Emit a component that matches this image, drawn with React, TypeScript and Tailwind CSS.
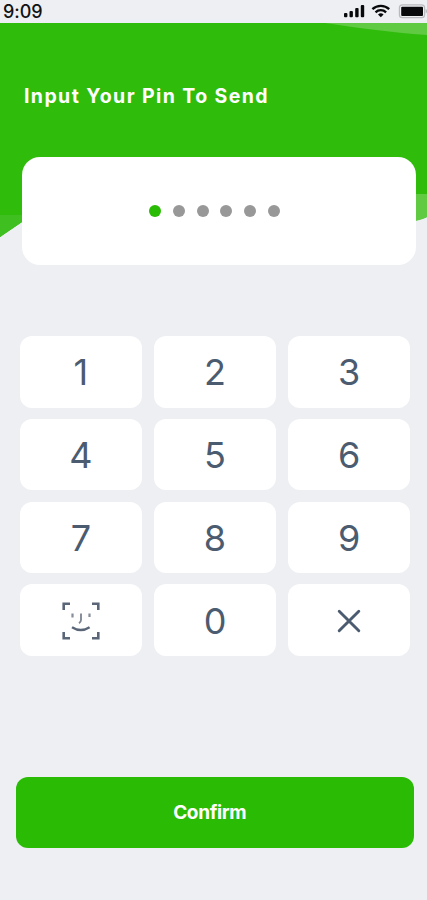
import React, { useState } from 'react';

const keys = ['1', '2', '3', '4', '5', '6', '7', '8', '9', 'face', '0', 'clear'];

function StatusBar() {
    return (
        <div className='w-full h-[23px] relative flex items-center justify-between bg-[#eeeff3] pl-[3px]'>
            <span className='text-[18px] leading-[22px] font-medium text-[#111214] tracking-[-0.05px]'>9:09</span>
            <svg className='w-[84px] h-[23px]' viewBox='343 0 84 23' fill='#08090a'>
                <rect x='344' y='13' width='3.4' height='4.2' rx='1' />
                <rect x='349.5' y='11' width='3.4' height='6.2' rx='1' />
                <rect x='355.2' y='8' width='3.4' height='9.2' rx='1' />
                <rect x='360.8' y='5' width='3.4' height='12.2' rx='1' />
                <g fill='none' stroke='#08090a' strokeWidth='2.3'>
                    <path d='M372.4 9.2a12.2 12.2 0 0 1 16.8 0' />
                    <path d='M375.5 12.3a7.7 7.7 0 0 1 10.6 0' />
                </g>
                <path d='M378 14.4a4.3 4.3 0 0 1 5.6 0l-2.8 2.9z' />
                <rect x='399.4' y='4.9' width='25.2' height='12.8' rx='3' fill='none' stroke='#b9babe' strokeWidth='1.2' />
                <rect x='401.2' y='6.7' width='21.8' height='9.2' rx='1' />
                <path d='M425.7 9v4.5c1-.3 1.3-1.2 1.3-2.2s-.3-2-1.3-2.3z' fill='#b9babe' />
            </svg>
        </div>
    );
}

function HeaderShape() {
    return (
        <svg className='absolute top-0 left-0 w-[427px] h-[216px]' viewBox='0 0 427 216'>
            <path d='M0 0H427V194Q416 198 400 200L40 187L22 199L0 214Z' fill='#2fbc0b' />
            <path d='M110 0H427V12Q385 9 325 0Z' fill='#5fca42' />
            <path d='M0 192H32L22 199L0 214Z' fill='#40c020' />
            <path d='M410 171H427V194Q422 197 410 199Z' fill='#5fca42' />
        </svg>
    );
}

function FaceIcon() {
    return (
        <svg className='w-[38px] h-[38px] mt-[2px]' viewBox='0 0 38 38' fill='none' stroke='#5a6677'>
            <path d='M1.7 8V1.7H8M30 1.7h6.3V8M1.7 30v6.3H8M30 36.3h6.3V30' strokeWidth='2.6' />
            <path d='M10.5 11.5v4M27.5 11.5v3.5' strokeWidth='2.2' stroke='#858e9a' />
            <path d='M19 11.5v6.5q0 1.8-2 3.2' strokeWidth='1.8' stroke='#7b8490' />
            <path d='M10 25.2q8.8 5.6 17.6 0' strokeWidth='2.4' />
        </svg>
    );
}

function ClearIcon() {
    return (
        <svg className='w-6 h-6 mr-[1px] mt-[2px]' viewBox='0 0 24 24' fill='none' stroke='#4b5b70' strokeWidth='2.9' strokeLinecap='round'>
            <path d='M2.2 2.2l19.6 19.6M21.8 2.2L2.2 21.8' />
        </svg>
    );
}

function App() {
    const [pin, setPin] = useState('0');

    const handleKey = (key: string) => {
        if (key === 'face') return;
        if (key === 'clear') {
            setPin(pin.slice(0, -1));
            return;
        }
        if (pin.length < 6) setPin(pin + key);
    };

    return (
        <div className="w-[427px] h-[900px] overflow-hidden bg-[#edeff3] font-['Inter','Liberation_Sans',sans-serif]">
            <StatusBar />
            <main className='relative w-full'>
                <HeaderShape />
                <div className='relative flex flex-col'>
                    <h1 className='pt-[59px] pl-6 text-[19.5px] leading-[28px] font-bold text-white tracking-[1.4px] whitespace-nowrap'>Input Your Pin To Send</h1>

                    <div className='mt-[46.5px] ml-[21.5px] w-[394px] h-[108px] rounded-[18px] bg-white flex items-center justify-center gap-[11.8px] pr-[8px]'>
                        {[0, 1, 2, 3, 4, 5].map((i) => (
                            <span key={i} className={`w-3 h-3 rounded-full ${i < pin.length ? 'bg-[#2abb05]' : 'bg-[#989898]'}`} />
                        ))}
                    </div>

                    <div className='mt-[71.5px] ml-[19.5px] w-[391px] grid grid-cols-3 gap-x-[11.5px] gap-y-[11.3px]'>
                        {keys.map((key) => (
                            <button key={key} onClick={() => handleKey(key)} aria-label={key} className='h-[71.5px] rounded-[12px] bg-white flex items-center justify-center text-[36px] leading-[40px] font-normal text-[#4b5b70] cursor-pointer'>
                                {key === 'face' ? <FaceIcon /> : key === 'clear' ? <ClearIcon /> : <span className='pt-[1px]'>{key}</span>}
                            </button>
                        ))}
                    </div>

                    <button className='mt-[121px] ml-4 w-[397.5px] h-[71px] rounded-[12px] bg-[#2abb05] text-white text-[19px] font-bold tracking-[-0.35px] flex items-center justify-center pt-[2px] pr-[10px] cursor-pointer'>Confirm</button>
                </div>
            </main>
        </div>
    );
}

export default App;
